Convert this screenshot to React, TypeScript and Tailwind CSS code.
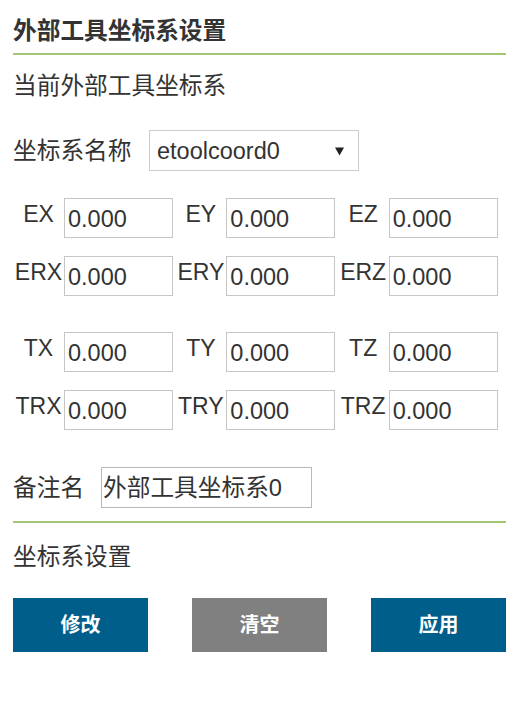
import React from "react";

const FONT = { fontFamily: '"Liberation Sans", "Noto Sans CJK SC", sans-serif' };

function Field({ label, value }: { label: string; value: string }) {
  return (
    <div className="flex items-start">
      <div className="w-[51px] text-center text-[23px] leading-[23px] mt-[5px] text-[#333]">{label}</div>
      <div className="w-[109px] h-[40px] border border-[#c6c6c6] bg-white flex items-center pl-[3px] pt-[2px] text-[23.5px] leading-[26px] text-[#333]">
        {value}
      </div>
    </div>
  );
}

export default function App() {
  return (
    <div className="w-[520px] h-[705px] bg-white text-[#333]" style={FONT}>
      <div className="px-[13px]">
        <div className="pt-[19px] text-[23.7px] leading-[24px] font-bold text-[#333]">外部工具坐标系设置</div>
        <div className="mt-[10px] h-[2px] w-[493px] bg-[#a3c873]" />
        <div className="mt-[19px] text-[23.7px] leading-[24px]">当前外部工具坐标系</div>

        <div className="mt-[32px] flex items-center">
          <div className="w-[136px] text-[23.7px] leading-[24px]">坐标系名称</div>
          <div className="w-[210px] h-[41px] border border-[#cccccc] bg-white flex items-center justify-between pl-[7px] pr-[14px] text-[23.5px] leading-[26px]">
            <span>etoolcoord0</span>
            <svg width="9" height="9" viewBox="0 0 9 9" className="mt-[1px]">
              <path d="M0 0.5 L9 0.5 L4.5 8.5 Z" fill="#222" />
            </svg>
          </div>
        </div>

        <div className="mt-[27px] w-[487px] grid grid-cols-3 gap-y-[18px]">
          <Field label="EX" value="0.000" />
          <Field label="EY" value="0.000" />
          <Field label="EZ" value="0.000" />
          <Field label="ERX" value="0.000" />
          <Field label="ERY" value="0.000" />
          <Field label="ERZ" value="0.000" />
        </div>

        <div className="mt-[36px] w-[487px] grid grid-cols-3 gap-y-[18px]">
          <Field label="TX" value="0.000" />
          <Field label="TY" value="0.000" />
          <Field label="TZ" value="0.000" />
          <Field label="TRX" value="0.000" />
          <Field label="TRY" value="0.000" />
          <Field label="TRZ" value="0.000" />
        </div>

        <div className="mt-[37px] flex items-center">
          <div className="w-[88px] text-[23.7px] leading-[24px]">备注名</div>
          <div className="w-[211px] h-[41px] border border-[#b8b8b8] bg-white flex items-center pl-[1px] text-[23.7px] leading-[26px]">
            外部工具坐标系0
          </div>
        </div>

        <div className="mt-[13px] h-[2px] w-[493px] bg-[#a3c873]" />
        <div className="mt-[22px] text-[23.7px] leading-[24px]">坐标系设置</div>

        <div className="mt-[29px] w-[493px] flex justify-between">
          <div className="w-[135px] h-[54px] bg-[#005e8b] text-white font-bold text-[20px] flex items-center justify-center">修改</div>
          <div className="w-[135px] h-[54px] bg-[#808080] text-white font-bold text-[20px] flex items-center justify-center">清空</div>
          <div className="w-[135px] h-[54px] bg-[#005e8b] text-white font-bold text-[20px] flex items-center justify-center">应用</div>
        </div>
      </div>
    </div>
  );
}
